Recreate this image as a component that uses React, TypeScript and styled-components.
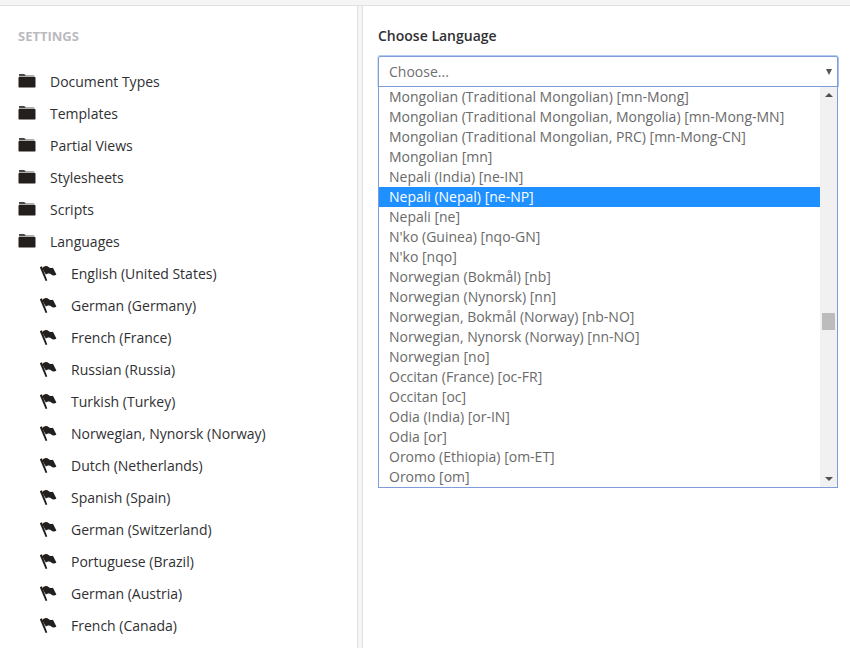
import React from "react";
import styled, { createGlobalStyle } from "styled-components";

const Global = createGlobalStyle`
  html, body { margin: 0; padding: 0; background: #fff; overflow: hidden; }
  body { font-family: "Open Sans", "Liberation Sans", sans-serif; font-size: 14px; color: #303033; }
`;

const Page = styled.div`
  width: 850px;
  height: 648px;
  overflow: hidden;
  display: flex;
  flex-direction: column;
`;
const TopStrip = styled.div`
  height: 5px;
  flex: none;
  background: #f5f5f5;
  border-bottom: 1px solid #e0e0e0;
`;
const Columns = styled.div`
  flex: 1;
  display: flex;
  min-height: 0;
`;
const Sidebar = styled.nav`
  width: 358px;
  flex: none;
  box-sizing: border-box;
  border-right: 1px solid #e0e0e0;
  padding: 0 0 0 18px;
`;
const Splitter = styled.div`
  width: 4px;
  flex: none;
  background: #f5f5f5;
`;
const Main = styled.main`
  flex: 1;
  border-left: 1px solid #e0e0e0;
  padding: 20px 12px 0 15px;
  min-width: 0;
`;
const SectionTitle = styled.h2`
  margin: 0 0 19px;
  padding-top: 21px;
  height: 19px;
  font-size: 13px;
  line-height: 19px;
  font-weight: 700;
  color: #bbbabf;
  text-transform: uppercase;
`;
const Row = styled.div<{ $indent?: boolean }>`
  height: 32px;
  display: flex;
  align-items: center;
  padding-left: ${(p) => (p.$indent ? "21px" : "0")};
  color: #303033;
  font-size: 14px;
  white-space: nowrap;
`;
const IconSlot = styled.span`
  width: 32px;
  height: 16px;
  flex: none;
  display: flex;
  align-items: center;
  svg { display: block; }
`;
const FieldLabel = styled.label`
  display: block;
  font-size: 14px;
  line-height: 20px;
  font-weight: 600;
  color: #303033;
  margin-bottom: 10px;
`;
const SelectBox = styled.div`
  width: 460px;
  height: 31px;
  box-sizing: border-box;
  border: 1px solid #7f9ddb;
  border-radius: 2px 2px 0 0;
  box-shadow: 1px 0 0 #a9c0ee, 0 -1px 0 #b4c8f0, -1px 0 0 #d5e0f7;
  padding-left: 10px;
  display: flex;
  align-items: center;
  justify-content: space-between;
  color: #6f6f6f;
  font-size: 14px;
`;
const Caret = styled.span`
  width: 0;
  height: 0;
  margin-right: 5px;
  border-left: 3px solid transparent;
  border-right: 3px solid transparent;
  border-top: 6px solid #555;
`;
const ListBox = styled.div`
  width: 460px;
  height: 402px;
  box-sizing: border-box;
  margin-top: -1px;
  border: 1px solid #7f9ddb;
  display: flex;
  background: #fff;
`;
const Options = styled.ul`
  list-style: none;
  margin: 0;
  padding: 0;
  flex: 1;
  min-width: 0;
`;
const Option = styled.li<{ $selected?: boolean }>`
  height: 20px;
  line-height: 20px;
  padding-left: 10px;
  font-size: 14px;
  white-space: nowrap;
  overflow: hidden;
  color: ${(p) => (p.$selected ? "#fff" : "#6a6a6a")};
  background: ${(p) => (p.$selected ? "#1e90ff" : "transparent")};
`;
const Scrollbar = styled.div`
  width: 17px;
  flex: none;
  background: #f1f1f1;
  display: flex;
  flex-direction: column;
  align-items: center;
  justify-content: space-between;
  position: relative;
`;
const ArrowUp = styled.span`
  width: 0;
  height: 0;
  margin-top: 6px;
  border-left: 4px solid transparent;
  border-right: 4px solid transparent;
  border-bottom: 4px solid #505050;
`;
const ArrowDown = styled.span`
  width: 0;
  height: 0;
  margin-bottom: 6px;
  border-left: 4px solid transparent;
  border-right: 4px solid transparent;
  border-top: 4px solid #505050;
`;
const Thumb = styled.span`
  position: absolute;
  left: 2px;
  top: 226px;
  width: 13px;
  height: 17px;
  background: #bcbcbc;
`;

const FolderIcon = () => (
  <svg width="18" height="16" viewBox="0 0 18 16" aria-hidden="true">
    <path d="M1.2 1.6h5.2c.7 0 1 .3 1.3.9h8.2c.4 0 .6.2.6.6v.3H1V2c0-.3 0-.4.2-.4z" fill="#5e5c5a" />
    <path d="M1.2 1.2h5.4v1.1H1z" fill="#221f1c" />
    <path d="M1.2 4h15.6c.4 0 .7.3.7.7v9.1c0 .5-.3.7-.7.7H1.2c-.5 0-.7-.2-.7-.7V4.7c0-.4.2-.7.7-.7z" fill="#221f1c" />
  </svg>
);
const FlagIcon = () => (
  <svg width="18" height="16" viewBox="0 0 18 16" aria-hidden="true">
    <path d="M.8 2.2l2.1-1 5.4 14.2-1.7.6z" fill="#221f1c" />
    <path d="M3.2 3.2C4.8 1.2 6.6.7 8.4 1.2c1.3.4 1.7 1.5 3 1.8 1 .2 1.7 0 2.5-.3l3.5 6.8c-1.2 1.1-2.6 1.3-3.9.8-1.3-.5-2-1.6-3.4-1.8-1.1-.2-2.2.2-3.3 1z" fill="#221f1c" />
  </svg>
);

const folders = ["Document Types", "Templates", "Partial Views", "Stylesheets", "Scripts", "Languages"];
const languages = [
  "English (United States)",
  "German (Germany)",
  "French (France)",
  "Russian (Russia)",
  "Turkish (Turkey)",
  "Norwegian, Nynorsk (Norway)",
  "Dutch (Netherlands)",
  "Spanish (Spain)",
  "German (Switzerland)",
  "Portuguese (Brazil)",
  "German (Austria)",
  "French (Canada)",
];
const options = [
  "Mongolian (Traditional Mongolian) [mn-Mong]",
  "Mongolian (Traditional Mongolian, Mongolia) [mn-Mong-MN]",
  "Mongolian (Traditional Mongolian, PRC) [mn-Mong-CN]",
  "Mongolian [mn]",
  "Nepali (India) [ne-IN]",
  "Nepali (Nepal) [ne-NP]",
  "Nepali [ne]",
  "N'ko (Guinea) [nqo-GN]",
  "N'ko [nqo]",
  "Norwegian (Bokmål) [nb]",
  "Norwegian (Nynorsk) [nn]",
  "Norwegian, Bokmål (Norway) [nb-NO]",
  "Norwegian, Nynorsk (Norway) [nn-NO]",
  "Norwegian [no]",
  "Occitan (France) [oc-FR]",
  "Occitan [oc]",
  "Odia (India) [or-IN]",
  "Odia [or]",
  "Oromo (Ethiopia) [om-ET]",
  "Oromo [om]",
];

export default function App() {
  return (
    <Page>
      <Global />
      <TopStrip />
      <Columns>
        <Sidebar>
          <SectionTitle>Settings</SectionTitle>
          {folders.map((f) => (
            <Row key={f}>
              <IconSlot><FolderIcon /></IconSlot>
              {f}
            </Row>
          ))}
          {languages.map((l) => (
            <Row key={l} $indent>
              <IconSlot><FlagIcon /></IconSlot>
              {l}
            </Row>
          ))}
        </Sidebar>
        <Splitter />
        <Main>
          <FieldLabel>Choose Language</FieldLabel>
          <SelectBox>
            Choose...
            <Caret />
          </SelectBox>
          <ListBox>
            <Options>
              {options.map((o) => (
                <Option key={o} $selected={o === "Nepali (Nepal) [ne-NP]"}>{o}</Option>
              ))}
            </Options>
            <Scrollbar>
              <ArrowUp />
              <Thumb />
              <ArrowDown />
            </Scrollbar>
          </ListBox>
        </Main>
      </Columns>
    </Page>
  );
}
